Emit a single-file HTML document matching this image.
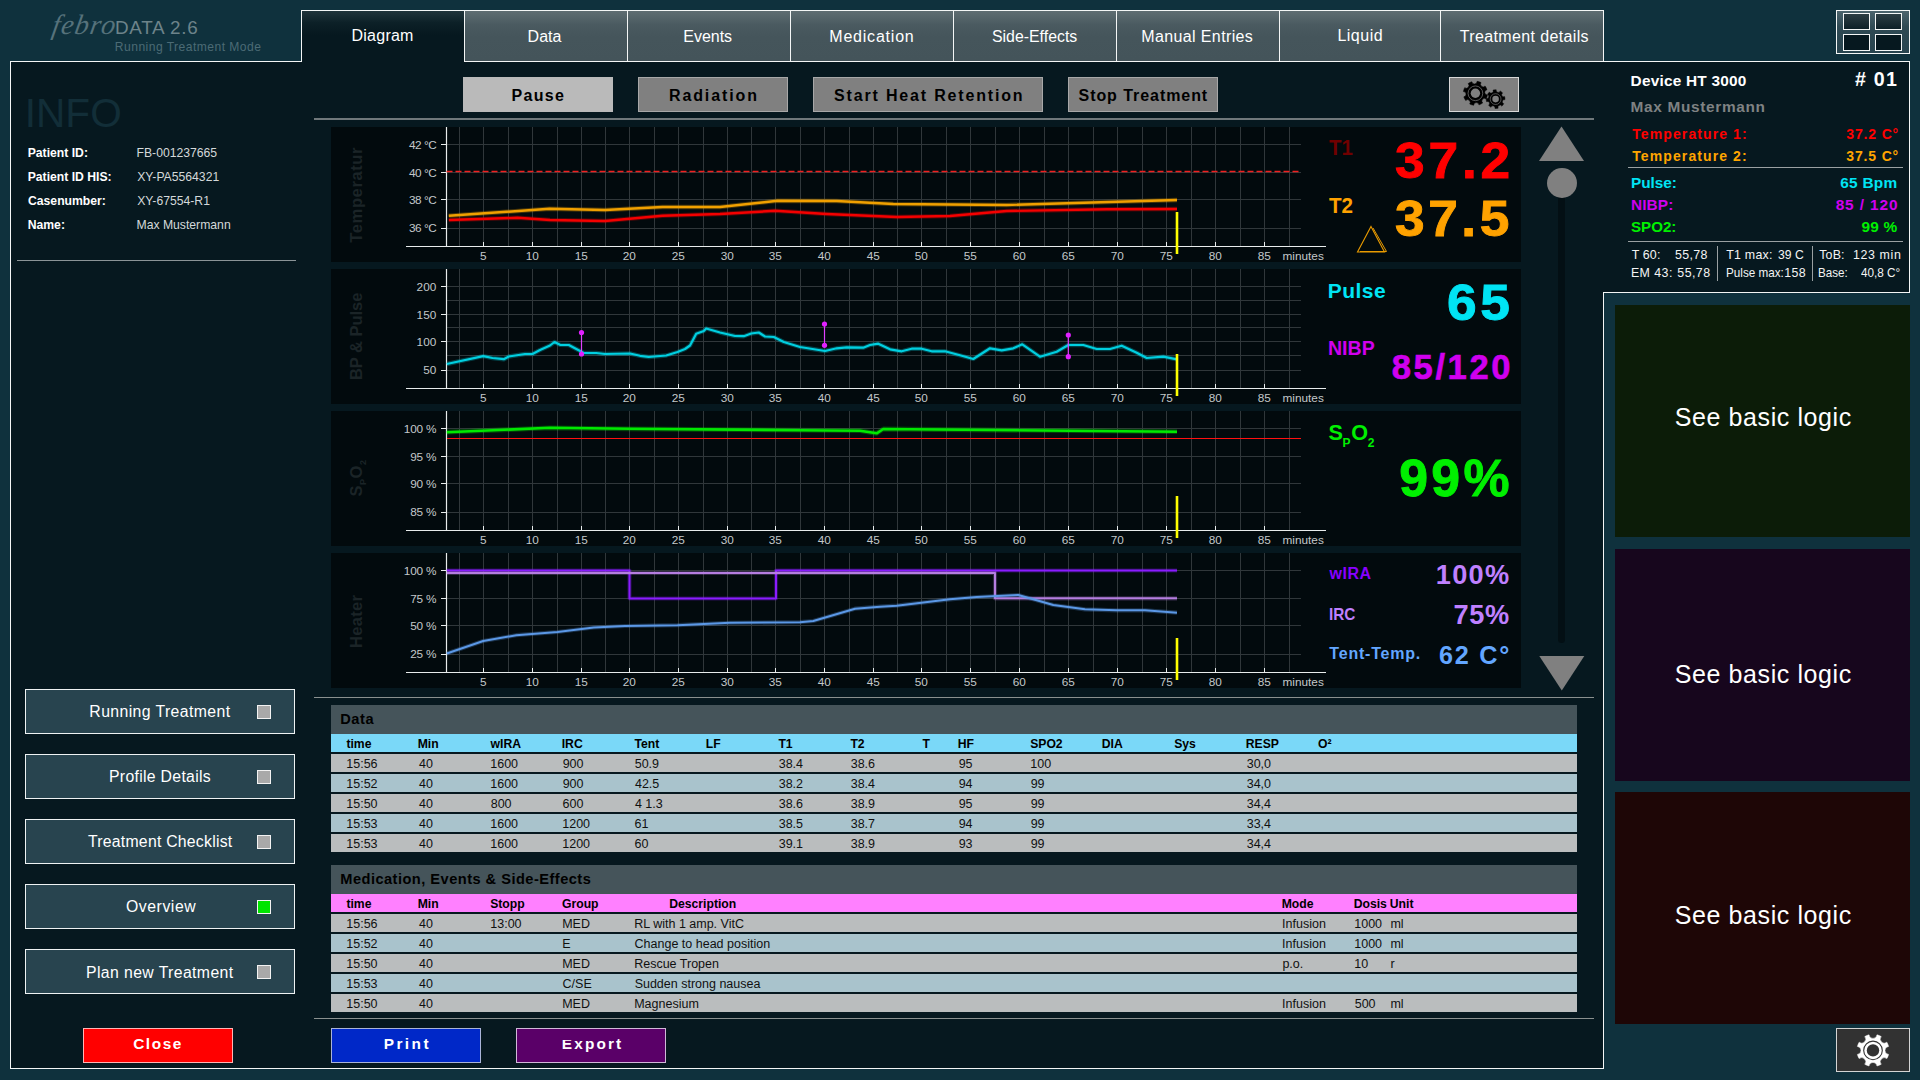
<!DOCTYPE html>
<html lang="en"><head><meta charset="utf-8"><title>febroDATA 2.6 - Running Treatment Mode</title>
<style>
html,body{margin:0;padding:0}
body{width:1920px;height:1080px;background:#0f313d;position:relative;overflow:hidden;font-family:"Liberation Sans",sans-serif}
.t{position:absolute;line-height:1;white-space:nowrap;margin:0;padding:0}
.b{position:absolute;box-sizing:border-box}
svg{position:absolute;left:0;top:0;overflow:visible}
.tab{position:absolute;box-sizing:border-box;top:10px;height:51px;border:1px solid #f4f6f6;border-bottom:none;background:linear-gradient(to bottom,#5f6d72 0px,#4a5a60 14px,#45555b 26px,#44545a 100%)}
.tab.on{height:52px;background:linear-gradient(to bottom,#20343b 0px,#0c2027 12px,#06181f 24px,#06181f 100%)}
.sb{position:absolute;box-sizing:border-box;left:25px;width:270px;height:45px;background:#28444f;border:1px solid #eef2f3}
.cb{position:absolute;box-sizing:border-box;left:231px;top:15px;width:14px;height:14px;background:#a9a9a9;border:1px solid #f2f2f2}
.row{position:absolute;left:331px;width:1246px;height:18px}
</style></head><body>

<div class="b" style="left:10px;top:61px;width:1594px;height:1008px;background:#06181f;border:1px solid #f4f6f6;border-right:none;"></div>
<div class="b" style="left:1603px;top:61px;width:307px;height:232px;background:#06181f;border:1px solid #f4f6f6;border-left:none;"></div>
<div class="b" style="left:1603px;top:292px;width:1px;height:777px;background:#f4f6f6;"></div>
<nav aria-label="Views">
<div class="tab on" style="left:301px;width:164px"></div>
<span class="t" style="left:351.52px;top:28.36px;font-size:16px;color:#fff;letter-spacing:0.24px;">Diagram</span>
<div class="tab" style="left:464px;width:164px"></div>
<span class="t" style="left:527.62px;top:29.46px;font-size:16px;color:#fff;letter-spacing:0.01px;">Data</span>
<div class="tab" style="left:627px;width:164px"></div>
<span class="t" style="left:683.32px;top:29.46px;font-size:16px;color:#fff;letter-spacing:-0.03px;">Events</span>
<div class="tab" style="left:790px;width:164px"></div>
<span class="t" style="left:829.32px;top:29.46px;font-size:16px;color:#fff;letter-spacing:0.78px;">Medication</span>
<div class="tab" style="left:953px;width:164px"></div>
<span class="t" style="left:991.59px;top:29.46px;font-size:16px;color:#fff;transform:scaleX(0.9915);transform-origin:0 0;">Side-Effects</span>
<div class="tab" style="left:1116px;width:164px"></div>
<span class="t" style="left:1141.32px;top:29.46px;font-size:16px;color:#fff;letter-spacing:0.37px;">Manual Entries</span>
<div class="tab" style="left:1279px;width:162px"></div>
<span class="t" style="left:1337.42px;top:28.36px;font-size:16px;color:#fff;letter-spacing:0.50px;">Liquid</span>
<div class="tab" style="left:1440px;width:164px"></div>
<span class="t" style="left:1459.78px;top:29.46px;font-size:16px;color:#fff;letter-spacing:0.36px;">Treatment details</span>
</nav>
<header>
<span class="t" style="left:49.72px;top:10.50px;font-size:28px;color:#56727b;font-style:italic;font-family:'Liberation Serif',serif;letter-spacing:1.25px;transform:skewX(-10deg);transform-origin:0 100%;">febro</span>
<span class="t" style="left:115.09px;top:19.10px;font-size:18.9px;color:#6d838a;letter-spacing:0.65px;">DATA 2.6</span>
<span class="t" style="left:114.83px;top:41.16px;font-size:12.1px;color:#4c6b75;letter-spacing:0.46px;">Running Treatment Mode</span>
<div class="b" style="left:1836px;top:10px;width:74px;height:44px;background:linear-gradient(to bottom,#4c646d 0px,#2f4a54 16px,#28444f 100%);border:1px solid #f4f6f6;"></div>
<div class="b" style="left:1843px;top:13px;width:27px;height:17px;background:linear-gradient(to bottom,#2c3d43,#0d2027);border:1px solid #f4f6f6;"></div>
<div class="b" style="left:1875px;top:13px;width:27px;height:17px;background:linear-gradient(to bottom,#2c3d43,#0d2027);border:1px solid #f4f6f6;"></div>
<div class="b" style="left:1843px;top:34px;width:27px;height:17px;background:#06181f;border:1px solid #f4f6f6;"></div>
<div class="b" style="left:1875px;top:34px;width:27px;height:17px;background:#06181f;border:1px solid #f4f6f6;"></div>
</header>
<aside aria-label="Patient info and navigation">
<span class="t" style="left:24.65px;top:92.93px;font-size:40.6px;color:#122e38;letter-spacing:0.06px;">INFO</span>
<span class="t" style="left:27.71px;top:146.97px;font-size:12.2px;color:#fff;font-weight:bold;">Patient ID:</span>
<span class="t" style="left:136.52px;top:146.97px;font-size:12.2px;color:#d4d9da;">FB-001237665</span>
<span class="t" style="left:27.71px;top:170.97px;font-size:12.2px;color:#fff;font-weight:bold;">Patient ID HIS:</span>
<span class="t" style="left:137.19px;top:170.97px;font-size:12.2px;color:#d4d9da;">XY-PA5564321</span>
<span class="t" style="left:28.01px;top:194.97px;font-size:12.2px;color:#fff;font-weight:bold;">Casenumber:</span>
<span class="t" style="left:137.19px;top:194.97px;font-size:12.2px;color:#d4d9da;">XY-67554-R1</span>
<span class="t" style="left:27.71px;top:218.97px;font-size:12.2px;color:#fff;font-weight:bold;">Name:</span>
<span class="t" style="left:136.52px;top:218.97px;font-size:12.2px;color:#d4d9da;">Max Mustermann</span>
<div class="b" style="left:17px;top:259.5px;width:279px;height:1.5px;background:#8b9497;"></div>
<div class="sb" style="top:689px"><div class="cb" style=""></div></div>
<span class="t" style="left:89.34px;top:704.43px;font-size:15.8px;color:#fff;letter-spacing:0.40px;">Running Treatment</span>
<div class="sb" style="top:754px"><div class="cb" style=""></div></div>
<span class="t" style="left:109.04px;top:769.43px;font-size:15.8px;color:#fff;letter-spacing:0.30px;">Profile Details</span>
<div class="sb" style="top:819px"><div class="cb" style=""></div></div>
<span class="t" style="left:87.98px;top:834.43px;font-size:15.8px;color:#fff;letter-spacing:0.24px;">Treatment Checklist</span>
<div class="sb" style="top:884px"><div class="cb" style="background:#00e400;"></div></div>
<span class="t" style="left:125.99px;top:899.43px;font-size:15.8px;color:#fff;letter-spacing:0.55px;">Overview</span>
<div class="sb" style="top:949px"><div class="cb" style=""></div></div>
<span class="t" style="left:86.04px;top:965.13px;font-size:15.8px;color:#fff;letter-spacing:0.39px;">Plan new Treatment</span>
<div class="b" style="left:83px;top:1028px;width:150px;height:35px;background:#ff0000;border:1px solid #ffb4b4;"></div>
<span class="t" style="left:133.18px;top:1035.66px;font-size:15.4px;color:#fff;font-weight:bold;letter-spacing:1.58px;">Close</span>
</aside>
<main>
<div class="b" style="left:331px;top:1028px;width:150px;height:35px;background:#0028c8;border:1px solid #aab4d8;"></div>
<span class="t" style="left:383.70px;top:1035.66px;font-size:15.4px;color:#fff;font-weight:bold;letter-spacing:2.46px;">Print</span>
<div class="b" style="left:516px;top:1028px;width:150px;height:35px;background:#5a0068;border:1px solid #d0b8d8;"></div>
<span class="t" style="left:561.80px;top:1035.66px;font-size:15.4px;color:#fff;font-weight:bold;letter-spacing:2.13px;">Export</span>
<div class="b" style="left:561px;top:1036px;width:12px;height:3.6px;background:#5a0068;"></div>
<div class="b" style="left:463px;top:77px;width:150px;height:35px;background:#bababa;border:1px solid #bababa;"></div>
<span class="t" style="left:511.46px;top:87.96px;font-size:16px;color:#000;font-weight:bold;letter-spacing:1.35px;">Pause</span>
<div class="b" style="left:638px;top:77px;width:150px;height:35px;background:#808080;border:1px solid #a8a8a8;"></div>
<span class="t" style="left:668.96px;top:87.96px;font-size:16px;color:#000;font-weight:bold;letter-spacing:1.89px;">Radiation</span>
<div class="b" style="left:813px;top:77px;width:230px;height:35px;background:#808080;border:1px solid #a8a8a8;"></div>
<span class="t" style="left:834.02px;top:87.96px;font-size:16px;color:#000;font-weight:bold;letter-spacing:1.83px;">Start Heat Retention</span>
<div class="b" style="left:1068px;top:77px;width:150px;height:35px;background:#808080;border:1px solid #a8a8a8;"></div>
<span class="t" style="left:1078.52px;top:87.96px;font-size:16px;color:#000;font-weight:bold;letter-spacing:0.94px;">Stop Treatment</span>
<div class="b" style="left:1449px;top:77px;width:70px;height:35px;background:#808080;border:1px solid #d8d8d8;"></div>
<svg width="1920" height="1080" viewBox="0 0 1920 1080">
<path d="M1482.66 102.98A12.1 12.1 0 0 1 1478.96 104.86A2.65 2.65 0 0 0 1473.69 105.28A12.1 12.1 0 0 1 1469.74 104.00A2.65 2.65 0 0 0 1465.72 100.56A12.1 12.1 0 0 1 1463.84 96.86A2.65 2.65 0 0 0 1463.42 91.59A12.1 12.1 0 0 1 1464.70 87.64A2.65 2.65 0 0 0 1468.14 83.62A12.1 12.1 0 0 1 1471.84 81.74A2.65 2.65 0 0 0 1477.11 81.32A12.1 12.1 0 0 1 1481.06 82.60A2.65 2.65 0 0 0 1485.08 86.04A12.1 12.1 0 0 1 1486.96 89.74A2.65 2.65 0 0 0 1487.38 95.01A12.1 12.1 0 0 1 1486.10 98.96A2.65 2.65 0 0 0 1482.66 102.98Z" fill="#000" stroke="#000" stroke-width="0.5" stroke-linejoin="round"/><circle cx="1475.4" cy="93.3" r="7.35" fill="none" stroke="#808080" stroke-width="0.7"/><circle cx="1475.4" cy="93.3" r="4.7" fill="#808080"/>
<path d="M1503.81 103.68A9.4 9.4 0 0 1 1501.79 106.18A2.06 2.06 0 0 0 1498.17 108.14A9.4 9.4 0 0 1 1494.97 108.48A2.06 2.06 0 0 0 1491.02 107.31A9.4 9.4 0 0 1 1488.52 105.29A2.06 2.06 0 0 0 1486.56 101.67A9.4 9.4 0 0 1 1486.22 98.47A2.06 2.06 0 0 0 1487.39 94.52A9.4 9.4 0 0 1 1489.41 92.02A2.06 2.06 0 0 0 1493.03 90.06A9.4 9.4 0 0 1 1496.23 89.72A2.06 2.06 0 0 0 1500.18 90.89A9.4 9.4 0 0 1 1502.68 92.91A2.06 2.06 0 0 0 1504.64 96.53A9.4 9.4 0 0 1 1504.98 99.73A2.06 2.06 0 0 0 1503.81 103.68Z" fill="#000" stroke="#000" stroke-width="0.4" stroke-linejoin="round"/><circle cx="1495.6" cy="99.1" r="5.4" fill="none" stroke="#808080" stroke-width="0.6"/><circle cx="1495.6" cy="99.1" r="3.3" fill="#808080"/>
</svg>
<div class="b" style="left:314px;top:118px;width:1280px;height:2px;background:#70787b;"></div>
<div class="b" style="left:314px;top:697px;width:1280px;height:1px;background:#8a908f;"></div>
<div class="b" style="left:314px;top:1018px;width:1280px;height:1px;background:#8a908f;"></div><div class="b" style="left:331px;top:127px;width:1190px;height:135px;background:#020a0d"></div>
<div class="b" style="left:331px;top:269px;width:1190px;height:135px;background:#020a0d"></div>
<div class="b" style="left:331px;top:411px;width:1190px;height:135px;background:#020a0d"></div>
<div class="b" style="left:331px;top:553px;width:1190px;height:135px;background:#020a0d"></div>
<svg width="1920" height="1080" viewBox="0 0 1920 1080" font-family="Liberation Sans, sans-serif">
<path d="M459.5 127V246.5 M483.5 127V246.5 M508.5 127V246.5 M532.5 127V246.5 M557.5 127V246.5 M581.5 127V246.5 M605.5 127V246.5 M629.5 127V246.5 M654.5 127V246.5 M678.5 127V246.5 M703.5 127V246.5 M727.5 127V246.5 M751.5 127V246.5 M775.5 127V246.5 M800.5 127V246.5 M824.5 127V246.5 M849.5 127V246.5 M873.5 127V246.5 M897.5 127V246.5 M921.5 127V246.5 M946.5 127V246.5 M970.5 127V246.5 M995.5 127V246.5 M1019.5 127V246.5 M1044.5 127V246.5 M1068.5 127V246.5 M1093.5 127V246.5 M1117.5 127V246.5 M1142.5 127V246.5 M1166.5 127V246.5 M1191.5 127V246.5 M1215.5 127V246.5 M1240.5 127V246.5 M1264.5 127V246.5 M1289.5 127V246.5 M446.5 144.5H1301 M446.5 172.5H1301 M446.5 199.5H1301 M446.5 228.5H1301" stroke="#30373a" stroke-width="1" fill="none" shape-rendering="crispEdges"/>
<path d="M483.5 242.0V246.5 M532.5 242.0V246.5 M581.5 242.0V246.5 M629.5 242.0V246.5 M678.5 242.0V246.5 M727.5 242.0V246.5 M775.5 242.0V246.5 M824.5 242.0V246.5 M873.5 242.0V246.5 M921.5 242.0V246.5 M970.5 242.0V246.5 M1019.5 242.0V246.5 M1068.5 242.0V246.5 M1117.5 242.0V246.5 M1166.5 242.0V246.5 M1215.5 242.0V246.5 M1264.5 242.0V246.5 M441.0 144.5H446.5 M441.0 172.5H446.5 M441.0 199.5H446.5 M441.0 228.5H446.5" stroke="#e8ecec" stroke-width="1" fill="none" shape-rendering="crispEdges"/>
<path d="M446.5 127V246.5 M406 246.5H1326" stroke="#e8ecec" stroke-width="1.2" fill="none"/>
<text x="483.3" y="259.6" font-size="11.8" fill="#c3c8ca" text-anchor="middle">5</text>
<text x="532.3" y="259.6" font-size="11.8" fill="#c3c8ca" text-anchor="middle">10</text>
<text x="581.3" y="259.6" font-size="11.8" fill="#c3c8ca" text-anchor="middle">15</text>
<text x="629.3" y="259.6" font-size="11.8" fill="#c3c8ca" text-anchor="middle">20</text>
<text x="678.3" y="259.6" font-size="11.8" fill="#c3c8ca" text-anchor="middle">25</text>
<text x="727.3" y="259.6" font-size="11.8" fill="#c3c8ca" text-anchor="middle">30</text>
<text x="775.3" y="259.6" font-size="11.8" fill="#c3c8ca" text-anchor="middle">35</text>
<text x="824.3" y="259.6" font-size="11.8" fill="#c3c8ca" text-anchor="middle">40</text>
<text x="873.3" y="259.6" font-size="11.8" fill="#c3c8ca" text-anchor="middle">45</text>
<text x="921.3" y="259.6" font-size="11.8" fill="#c3c8ca" text-anchor="middle">50</text>
<text x="970.3" y="259.6" font-size="11.8" fill="#c3c8ca" text-anchor="middle">55</text>
<text x="1019.3" y="259.6" font-size="11.8" fill="#c3c8ca" text-anchor="middle">60</text>
<text x="1068.3" y="259.6" font-size="11.8" fill="#c3c8ca" text-anchor="middle">65</text>
<text x="1117.3" y="259.6" font-size="11.8" fill="#c3c8ca" text-anchor="middle">70</text>
<text x="1166.3" y="259.6" font-size="11.8" fill="#c3c8ca" text-anchor="middle">75</text>
<text x="1215.3" y="259.6" font-size="11.8" fill="#c3c8ca" text-anchor="middle">80</text>
<text x="1264.3" y="259.6" font-size="11.8" fill="#c3c8ca" text-anchor="middle">85</text>
<text x="1282.5" y="259.5" font-size="11.8" fill="#c3c8ca">minutes</text>
<text x="436.3" y="149" font-size="11.8" fill="#c3c8ca" text-anchor="end" letter-spacing="-0.45">42 °C</text>
<text x="436.3" y="176.5" font-size="11.8" fill="#c3c8ca" text-anchor="end" letter-spacing="-0.45">40 °C</text>
<text x="436.3" y="203.8" font-size="11.8" fill="#c3c8ca" text-anchor="end" letter-spacing="-0.45">38 °C</text>
<text x="436.3" y="231.5" font-size="11.8" fill="#c3c8ca" text-anchor="end" letter-spacing="-0.45">36 °C</text>
<text transform="translate(361.5 194.8) rotate(-90)" font-size="16.5" font-weight="bold" fill="#1b2427" text-anchor="middle" letter-spacing="0.61">Temperatur</text>
<path d="M446.5 171.5H1301" stroke="#f02020" stroke-width="1.5" stroke-dasharray="6 3" fill="none"/>
<path d="M448.8 215.8 L549.5 208.8 L605.0 210.0 L662.5 207.0 L720.0 207.0 L777.5 200.8 L836.7 201.0 L893.3 204.0 L1006.7 205.0 L1177.0 200.0" stroke="#f0a000" stroke-width="4.6" fill="none" opacity="0.28" stroke-linejoin="round"/><path d="M448.8 215.8 L549.5 208.8 L605.0 210.0 L662.5 207.0 L720.0 207.0 L777.5 200.8 L836.7 201.0 L893.3 204.0 L1006.7 205.0 L1177.0 200.0" stroke="#f0a000" stroke-width="2.4" fill="none" stroke-linejoin="round"/>
<path d="M448.8 220.0 L517.5 217.8 L550.0 220.0 L605.0 221.0 L662.5 215.8 L720.0 214.0 L775.0 210.8 L826.7 214.0 L896.7 217.0 L950.0 216.0 L1006.7 211.0 L1106.7 209.3 L1177.0 209.0" stroke="#f40000" stroke-width="4.6" fill="none" opacity="0.28" stroke-linejoin="round"/><path d="M448.8 220.0 L517.5 217.8 L550.0 220.0 L605.0 221.0 L662.5 215.8 L720.0 214.0 L775.0 210.8 L826.7 214.0 L896.7 217.0 L950.0 216.0 L1006.7 211.0 L1106.7 209.3 L1177.0 209.0" stroke="#f40000" stroke-width="2.4" fill="none" stroke-linejoin="round"/>
<rect x="1175.7" y="212" width="2.6" height="42" fill="#ffff00"/>
<path d="M459.5 269V388.5 M483.5 269V388.5 M508.5 269V388.5 M532.5 269V388.5 M557.5 269V388.5 M581.5 269V388.5 M605.5 269V388.5 M629.5 269V388.5 M654.5 269V388.5 M678.5 269V388.5 M703.5 269V388.5 M727.5 269V388.5 M751.5 269V388.5 M775.5 269V388.5 M800.5 269V388.5 M824.5 269V388.5 M849.5 269V388.5 M873.5 269V388.5 M897.5 269V388.5 M921.5 269V388.5 M946.5 269V388.5 M970.5 269V388.5 M995.5 269V388.5 M1019.5 269V388.5 M1044.5 269V388.5 M1068.5 269V388.5 M1093.5 269V388.5 M1117.5 269V388.5 M1142.5 269V388.5 M1166.5 269V388.5 M1191.5 269V388.5 M1215.5 269V388.5 M1240.5 269V388.5 M1264.5 269V388.5 M1289.5 269V388.5 M446.5 286.5H1301 M446.5 314H1301 M446.5 341.5H1301 M446.5 370.25H1301 M446.5 300.25H1301 M446.5 327.75H1301 M446.5 355.9H1301" stroke="#30373a" stroke-width="1" fill="none" shape-rendering="crispEdges"/>
<path d="M483.5 384.0V388.5 M532.5 384.0V388.5 M581.5 384.0V388.5 M629.5 384.0V388.5 M678.5 384.0V388.5 M727.5 384.0V388.5 M775.5 384.0V388.5 M824.5 384.0V388.5 M873.5 384.0V388.5 M921.5 384.0V388.5 M970.5 384.0V388.5 M1019.5 384.0V388.5 M1068.5 384.0V388.5 M1117.5 384.0V388.5 M1166.5 384.0V388.5 M1215.5 384.0V388.5 M1264.5 384.0V388.5 M441.0 286.5H446.5 M441.0 314H446.5 M441.0 341.5H446.5 M441.0 370.25H446.5" stroke="#e8ecec" stroke-width="1" fill="none" shape-rendering="crispEdges"/>
<path d="M446.5 269V388.5 M406 388.5H1326" stroke="#e8ecec" stroke-width="1.2" fill="none"/>
<text x="483.3" y="401.6" font-size="11.8" fill="#c3c8ca" text-anchor="middle">5</text>
<text x="532.3" y="401.6" font-size="11.8" fill="#c3c8ca" text-anchor="middle">10</text>
<text x="581.3" y="401.6" font-size="11.8" fill="#c3c8ca" text-anchor="middle">15</text>
<text x="629.3" y="401.6" font-size="11.8" fill="#c3c8ca" text-anchor="middle">20</text>
<text x="678.3" y="401.6" font-size="11.8" fill="#c3c8ca" text-anchor="middle">25</text>
<text x="727.3" y="401.6" font-size="11.8" fill="#c3c8ca" text-anchor="middle">30</text>
<text x="775.3" y="401.6" font-size="11.8" fill="#c3c8ca" text-anchor="middle">35</text>
<text x="824.3" y="401.6" font-size="11.8" fill="#c3c8ca" text-anchor="middle">40</text>
<text x="873.3" y="401.6" font-size="11.8" fill="#c3c8ca" text-anchor="middle">45</text>
<text x="921.3" y="401.6" font-size="11.8" fill="#c3c8ca" text-anchor="middle">50</text>
<text x="970.3" y="401.6" font-size="11.8" fill="#c3c8ca" text-anchor="middle">55</text>
<text x="1019.3" y="401.6" font-size="11.8" fill="#c3c8ca" text-anchor="middle">60</text>
<text x="1068.3" y="401.6" font-size="11.8" fill="#c3c8ca" text-anchor="middle">65</text>
<text x="1117.3" y="401.6" font-size="11.8" fill="#c3c8ca" text-anchor="middle">70</text>
<text x="1166.3" y="401.6" font-size="11.8" fill="#c3c8ca" text-anchor="middle">75</text>
<text x="1215.3" y="401.6" font-size="11.8" fill="#c3c8ca" text-anchor="middle">80</text>
<text x="1264.3" y="401.6" font-size="11.8" fill="#c3c8ca" text-anchor="middle">85</text>
<text x="1282.5" y="401.5" font-size="11.8" fill="#c3c8ca">minutes</text>
<text x="436.3" y="291" font-size="11.8" fill="#c3c8ca" text-anchor="end">200</text>
<text x="436.3" y="318.5" font-size="11.8" fill="#c3c8ca" text-anchor="end">150</text>
<text x="436.3" y="345.8" font-size="11.8" fill="#c3c8ca" text-anchor="end">100</text>
<text x="436.3" y="373.5" font-size="11.8" fill="#c3c8ca" text-anchor="end">50</text>
<text transform="translate(361.5 336.3) rotate(-90)" font-size="16.5" font-weight="bold" fill="#1b2427" text-anchor="middle" letter-spacing="-0.03">BP &amp; Pulse</text>
<path d="M446.8 364.0 L483.2 356.2 L492.5 358.0 L503.8 359.2 L508.8 356.5 L525.0 354.0 L532.5 354.0 L540.0 350.0 L550.0 345.5 L554.5 342.0 L560.0 344.8 L568.8 345.0 L583.8 353.0 L596.2 353.0 L605.0 354.0 L630.0 353.5 L640.0 355.8 L648.8 357.0 L666.2 355.5 L677.5 352.0 L685.0 349.0 L690.0 345.5 L696.2 333.8 L703.8 331.0 L706.2 328.5 L720.0 332.5 L735.0 336.0 L743.8 336.2 L751.2 333.5 L758.8 332.5 L765.0 336.5 L773.8 337.0 L783.8 342.0 L800.0 347.0 L825.0 351.0 L836.7 348.3 L846.7 347.3 L863.3 347.7 L870.0 345.0 L878.3 343.7 L890.0 349.3 L901.7 351.3 L911.7 348.7 L921.7 348.7 L931.7 351.3 L945.0 351.3 L960.0 355.3 L973.3 359.0 L990.0 348.3 L1001.7 350.3 L1013.3 348.3 L1022.3 344.3 L1040.0 356.7 L1056.7 351.7 L1068.3 345.0 L1083.3 345.0 L1096.7 349.0 L1110.0 349.0 L1121.7 345.7 L1136.7 352.7 L1146.7 358.0 L1163.3 356.7 L1177.0 359.3" stroke="#00cfe0" stroke-width="4.4" fill="none" opacity="0.28" stroke-linejoin="round"/><path d="M446.8 364.0 L483.2 356.2 L492.5 358.0 L503.8 359.2 L508.8 356.5 L525.0 354.0 L532.5 354.0 L540.0 350.0 L550.0 345.5 L554.5 342.0 L560.0 344.8 L568.8 345.0 L583.8 353.0 L596.2 353.0 L605.0 354.0 L630.0 353.5 L640.0 355.8 L648.8 357.0 L666.2 355.5 L677.5 352.0 L685.0 349.0 L690.0 345.5 L696.2 333.8 L703.8 331.0 L706.2 328.5 L720.0 332.5 L735.0 336.0 L743.8 336.2 L751.2 333.5 L758.8 332.5 L765.0 336.5 L773.8 337.0 L783.8 342.0 L800.0 347.0 L825.0 351.0 L836.7 348.3 L846.7 347.3 L863.3 347.7 L870.0 345.0 L878.3 343.7 L890.0 349.3 L901.7 351.3 L911.7 348.7 L921.7 348.7 L931.7 351.3 L945.0 351.3 L960.0 355.3 L973.3 359.0 L990.0 348.3 L1001.7 350.3 L1013.3 348.3 L1022.3 344.3 L1040.0 356.7 L1056.7 351.7 L1068.3 345.0 L1083.3 345.0 L1096.7 349.0 L1110.0 349.0 L1121.7 345.7 L1136.7 352.7 L1146.7 358.0 L1163.3 356.7 L1177.0 359.3" stroke="#00cfe0" stroke-width="2.2" fill="none" stroke-linejoin="round"/>
<path d="M581.5 332.5V354" stroke="#e040ff" stroke-width="1.2"/><circle cx="581.5" cy="332.5" r="2.6" fill="#e020ff"/><circle cx="581.5" cy="354" r="2.6" fill="#e020ff"/>
<path d="M824.5 324V345.3" stroke="#e040ff" stroke-width="1.2"/><circle cx="824.5" cy="324" r="2.6" fill="#e020ff"/><circle cx="824.5" cy="345.3" r="2.6" fill="#e020ff"/>
<path d="M1068.3 335V356.7" stroke="#e040ff" stroke-width="1.2"/><circle cx="1068.3" cy="335" r="2.6" fill="#e020ff"/><circle cx="1068.3" cy="356.7" r="2.6" fill="#e020ff"/>
<rect x="1175.7" y="354" width="2.6" height="42" fill="#ffff00"/>
<path d="M459.5 411V530.5 M483.5 411V530.5 M508.5 411V530.5 M532.5 411V530.5 M557.5 411V530.5 M581.5 411V530.5 M605.5 411V530.5 M629.5 411V530.5 M654.5 411V530.5 M678.5 411V530.5 M703.5 411V530.5 M727.5 411V530.5 M751.5 411V530.5 M775.5 411V530.5 M800.5 411V530.5 M824.5 411V530.5 M849.5 411V530.5 M873.5 411V530.5 M897.5 411V530.5 M921.5 411V530.5 M946.5 411V530.5 M970.5 411V530.5 M995.5 411V530.5 M1019.5 411V530.5 M1044.5 411V530.5 M1068.5 411V530.5 M1093.5 411V530.5 M1117.5 411V530.5 M1142.5 411V530.5 M1166.5 411V530.5 M1191.5 411V530.5 M1215.5 411V530.5 M1240.5 411V530.5 M1264.5 411V530.5 M1289.5 411V530.5 M446.5 428.5H1301 M446.5 456.5H1301 M446.5 483.5H1301 M446.5 512.5H1301" stroke="#30373a" stroke-width="1" fill="none" shape-rendering="crispEdges"/>
<path d="M483.5 526.0V530.5 M532.5 526.0V530.5 M581.5 526.0V530.5 M629.5 526.0V530.5 M678.5 526.0V530.5 M727.5 526.0V530.5 M775.5 526.0V530.5 M824.5 526.0V530.5 M873.5 526.0V530.5 M921.5 526.0V530.5 M970.5 526.0V530.5 M1019.5 526.0V530.5 M1068.5 526.0V530.5 M1117.5 526.0V530.5 M1166.5 526.0V530.5 M1215.5 526.0V530.5 M1264.5 526.0V530.5 M441.0 428.5H446.5 M441.0 456.5H446.5 M441.0 483.5H446.5 M441.0 512.5H446.5" stroke="#e8ecec" stroke-width="1" fill="none" shape-rendering="crispEdges"/>
<path d="M446.5 411V530.5 M406 530.5H1326" stroke="#e8ecec" stroke-width="1.2" fill="none"/>
<text x="483.3" y="543.6" font-size="11.8" fill="#c3c8ca" text-anchor="middle">5</text>
<text x="532.3" y="543.6" font-size="11.8" fill="#c3c8ca" text-anchor="middle">10</text>
<text x="581.3" y="543.6" font-size="11.8" fill="#c3c8ca" text-anchor="middle">15</text>
<text x="629.3" y="543.6" font-size="11.8" fill="#c3c8ca" text-anchor="middle">20</text>
<text x="678.3" y="543.6" font-size="11.8" fill="#c3c8ca" text-anchor="middle">25</text>
<text x="727.3" y="543.6" font-size="11.8" fill="#c3c8ca" text-anchor="middle">30</text>
<text x="775.3" y="543.6" font-size="11.8" fill="#c3c8ca" text-anchor="middle">35</text>
<text x="824.3" y="543.6" font-size="11.8" fill="#c3c8ca" text-anchor="middle">40</text>
<text x="873.3" y="543.6" font-size="11.8" fill="#c3c8ca" text-anchor="middle">45</text>
<text x="921.3" y="543.6" font-size="11.8" fill="#c3c8ca" text-anchor="middle">50</text>
<text x="970.3" y="543.6" font-size="11.8" fill="#c3c8ca" text-anchor="middle">55</text>
<text x="1019.3" y="543.6" font-size="11.8" fill="#c3c8ca" text-anchor="middle">60</text>
<text x="1068.3" y="543.6" font-size="11.8" fill="#c3c8ca" text-anchor="middle">65</text>
<text x="1117.3" y="543.6" font-size="11.8" fill="#c3c8ca" text-anchor="middle">70</text>
<text x="1166.3" y="543.6" font-size="11.8" fill="#c3c8ca" text-anchor="middle">75</text>
<text x="1215.3" y="543.6" font-size="11.8" fill="#c3c8ca" text-anchor="middle">80</text>
<text x="1264.3" y="543.6" font-size="11.8" fill="#c3c8ca" text-anchor="middle">85</text>
<text x="1282.5" y="543.5" font-size="11.8" fill="#c3c8ca">minutes</text>
<text x="436.3" y="433" font-size="11.8" fill="#c3c8ca" text-anchor="end" letter-spacing="-0.2">100 %</text>
<text x="436.3" y="460.5" font-size="11.8" fill="#c3c8ca" text-anchor="end" letter-spacing="-0.2">95 %</text>
<text x="436.3" y="487.8" font-size="11.8" fill="#c3c8ca" text-anchor="end" letter-spacing="-0.2">90 %</text>
<text x="436.3" y="515.5" font-size="11.8" fill="#c3c8ca" text-anchor="end" letter-spacing="-0.2">85 %</text>
<text transform="translate(361.5 478) rotate(-90)" font-size="16.5" font-weight="bold" fill="#1b2427" text-anchor="middle" letter-spacing="0.5">S<tspan font-size="9" dy="4">P</tspan><tspan dy="-4">O</tspan><tspan font-size="9" dy="4">2</tspan></text>
<path d="M446.5 438.5H1301" stroke="#ff1010" stroke-width="1" shape-rendering="crispEdges"/>
<path d="M446.8 432.2 L550.0 427.8 L630.0 428.8 L800.0 430.2 L860.0 430.7 L876.7 433.3 L883.3 429.0 L1177.0 431.7" stroke="#00e800" stroke-width="4.800000000000001" fill="none" opacity="0.28" stroke-linejoin="round"/><path d="M446.8 432.2 L550.0 427.8 L630.0 428.8 L800.0 430.2 L860.0 430.7 L876.7 433.3 L883.3 429.0 L1177.0 431.7" stroke="#00e800" stroke-width="2.6" fill="none" stroke-linejoin="round"/>
<rect x="1175.7" y="496" width="2.6" height="42" fill="#ffff00"/>
<path d="M459.5 553V672.5 M483.5 553V672.5 M508.5 553V672.5 M532.5 553V672.5 M557.5 553V672.5 M581.5 553V672.5 M605.5 553V672.5 M629.5 553V672.5 M654.5 553V672.5 M678.5 553V672.5 M703.5 553V672.5 M727.5 553V672.5 M751.5 553V672.5 M775.5 553V672.5 M800.5 553V672.5 M824.5 553V672.5 M849.5 553V672.5 M873.5 553V672.5 M897.5 553V672.5 M921.5 553V672.5 M946.5 553V672.5 M970.5 553V672.5 M995.5 553V672.5 M1019.5 553V672.5 M1044.5 553V672.5 M1068.5 553V672.5 M1093.5 553V672.5 M1117.5 553V672.5 M1142.5 553V672.5 M1166.5 553V672.5 M1191.5 553V672.5 M1215.5 553V672.5 M1240.5 553V672.5 M1264.5 553V672.5 M1289.5 553V672.5 M446.5 570.5H1301 M446.5 598.5H1301 M446.5 625.5H1301 M446.5 654.5H1301" stroke="#30373a" stroke-width="1" fill="none" shape-rendering="crispEdges"/>
<path d="M483.5 668.0V672.5 M532.5 668.0V672.5 M581.5 668.0V672.5 M629.5 668.0V672.5 M678.5 668.0V672.5 M727.5 668.0V672.5 M775.5 668.0V672.5 M824.5 668.0V672.5 M873.5 668.0V672.5 M921.5 668.0V672.5 M970.5 668.0V672.5 M1019.5 668.0V672.5 M1068.5 668.0V672.5 M1117.5 668.0V672.5 M1166.5 668.0V672.5 M1215.5 668.0V672.5 M1264.5 668.0V672.5 M441.0 570.5H446.5 M441.0 598.5H446.5 M441.0 625.5H446.5 M441.0 654.5H446.5" stroke="#e8ecec" stroke-width="1" fill="none" shape-rendering="crispEdges"/>
<path d="M446.5 553V672.5 M406 672.5H1326" stroke="#e8ecec" stroke-width="1.2" fill="none"/>
<text x="483.3" y="685.6" font-size="11.8" fill="#c3c8ca" text-anchor="middle">5</text>
<text x="532.3" y="685.6" font-size="11.8" fill="#c3c8ca" text-anchor="middle">10</text>
<text x="581.3" y="685.6" font-size="11.8" fill="#c3c8ca" text-anchor="middle">15</text>
<text x="629.3" y="685.6" font-size="11.8" fill="#c3c8ca" text-anchor="middle">20</text>
<text x="678.3" y="685.6" font-size="11.8" fill="#c3c8ca" text-anchor="middle">25</text>
<text x="727.3" y="685.6" font-size="11.8" fill="#c3c8ca" text-anchor="middle">30</text>
<text x="775.3" y="685.6" font-size="11.8" fill="#c3c8ca" text-anchor="middle">35</text>
<text x="824.3" y="685.6" font-size="11.8" fill="#c3c8ca" text-anchor="middle">40</text>
<text x="873.3" y="685.6" font-size="11.8" fill="#c3c8ca" text-anchor="middle">45</text>
<text x="921.3" y="685.6" font-size="11.8" fill="#c3c8ca" text-anchor="middle">50</text>
<text x="970.3" y="685.6" font-size="11.8" fill="#c3c8ca" text-anchor="middle">55</text>
<text x="1019.3" y="685.6" font-size="11.8" fill="#c3c8ca" text-anchor="middle">60</text>
<text x="1068.3" y="685.6" font-size="11.8" fill="#c3c8ca" text-anchor="middle">65</text>
<text x="1117.3" y="685.6" font-size="11.8" fill="#c3c8ca" text-anchor="middle">70</text>
<text x="1166.3" y="685.6" font-size="11.8" fill="#c3c8ca" text-anchor="middle">75</text>
<text x="1215.3" y="685.6" font-size="11.8" fill="#c3c8ca" text-anchor="middle">80</text>
<text x="1264.3" y="685.6" font-size="11.8" fill="#c3c8ca" text-anchor="middle">85</text>
<text x="1282.5" y="685.5" font-size="11.8" fill="#c3c8ca">minutes</text>
<text x="436.3" y="575" font-size="11.8" fill="#c3c8ca" text-anchor="end" letter-spacing="-0.2">100 %</text>
<text x="436.3" y="602.5" font-size="11.8" fill="#c3c8ca" text-anchor="end" letter-spacing="-0.2">75 %</text>
<text x="436.3" y="629.8" font-size="11.8" fill="#c3c8ca" text-anchor="end" letter-spacing="-0.2">50 %</text>
<text x="436.3" y="657.5" font-size="11.8" fill="#c3c8ca" text-anchor="end" letter-spacing="-0.2">25 %</text>
<text transform="translate(361.5 621.4) rotate(-90)" font-size="16.5" font-weight="bold" fill="#1b2427" text-anchor="middle" letter-spacing="0.33">Heater</text>
<path d="M446.8 570.5 L629.5 570.5 L629.5 598.5 L776.0 598.5 L776.0 570.5 L1177.0 570.5" stroke="#8a1cff" stroke-width="4.2" fill="none" opacity="0.28" stroke-linejoin="round"/><path d="M446.8 570.5 L629.5 570.5 L629.5 598.5 L776.0 598.5 L776.0 570.5 L1177.0 570.5" stroke="#8a1cff" stroke-width="2" fill="none" stroke-linejoin="round"/>
<path d="M446.8 573.0 L995.0 573.0 L995.0 598.3 L1177.0 598.3" stroke="#b57ee0" stroke-width="4.2" fill="none" opacity="0.28" stroke-linejoin="round"/><path d="M446.8 573.0 L995.0 573.0 L995.0 598.3 L1177.0 598.3" stroke="#b57ee0" stroke-width="2" fill="none" stroke-linejoin="round"/>
<path d="M446.8 653.5 L483.2 641.0 L516.2 635.2 L557.5 632.0 L593.8 627.5 L625.0 626.0 L677.5 625.2 L730.0 622.8 L800.0 622.2 L813.3 621.0 L855.0 608.7 L880.0 606.7 L896.7 605.7 L950.0 599.3 L976.7 597.0 L1018.3 595.0 L1053.3 605.0 L1085.0 609.3 L1116.7 610.3 L1145.0 610.3 L1177.0 612.7" stroke="#5b98e6" stroke-width="4.2" fill="none" opacity="0.28" stroke-linejoin="round"/><path d="M446.8 653.5 L483.2 641.0 L516.2 635.2 L557.5 632.0 L593.8 627.5 L625.0 626.0 L677.5 625.2 L730.0 622.8 L800.0 622.2 L813.3 621.0 L855.0 608.7 L880.0 606.7 L896.7 605.7 L950.0 599.3 L976.7 597.0 L1018.3 595.0 L1053.3 605.0 L1085.0 609.3 L1116.7 610.3 L1145.0 610.3 L1177.0 612.7" stroke="#5b98e6" stroke-width="2" fill="none" stroke-linejoin="round"/>
<rect x="1175.7" y="638" width="2.6" height="42" fill="#ffff00"/>
<rect x="1558" y="190" width="7" height="453" rx="3.5" fill="#030f14"/>
<path d="M1561.5 126.5L1584 161H1539Z" fill="#808080"/>
<circle cx="1562" cy="183" r="15" fill="#808080"/>
<path d="M1539.3 656H1584.3L1561.8 690.5Z" fill="#808080"/>
<path d="M1371 226.5L1384.5 252H1357.5Z" stroke="#e89a00" stroke-width="1.1" fill="none" stroke-linejoin="miter"/>
<path d="M1373 228L1386.5 251.5H1360" stroke="#e89a00" stroke-width="1" fill="none"/>
</svg>
<span class="t" style="left:1329.30px;top:137.22px;font-size:22.3px;color:#700000;font-weight:bold;transform:scaleX(0.9125);transform-origin:0 0;">T1</span>
<span class="t" style="left:1394.87px;top:136.94px;font-size:49.8px;color:#ff0000;font-weight:bold;letter-spacing:3.56px;transform:scaleX(1.0700);transform-origin:0 0;-webkit-text-stroke:0.9px #ff0000;">37.2</span>
<span class="t" style="left:1329.29px;top:195.47px;font-size:22.3px;color:#ffa200;font-weight:bold;transform:scaleX(0.9248);transform-origin:0 0;">T2</span>
<span class="t" style="left:1394.87px;top:194.94px;font-size:49.8px;color:#ffa200;font-weight:bold;letter-spacing:3.31px;transform:scaleX(1.0700);transform-origin:0 0;-webkit-text-stroke:0.9px #ffa200;">37.5</span>
<span class="t" style="left:1327.63px;top:280.32px;font-size:21px;color:#00e4f4;font-weight:bold;letter-spacing:0.51px;">Pulse</span>
<span class="t" style="left:1446.83px;top:279.04px;font-size:49.8px;color:#00e4f4;font-weight:bold;letter-spacing:3.42px;transform:scaleX(1.0700);transform-origin:0 0;-webkit-text-stroke:0.9px #00e4f4;">65</span>
<span class="t" style="left:1328.23px;top:338.24px;font-size:20.8px;color:#d000ee;font-weight:bold;transform:scaleX(0.9397);transform-origin:0 0;">NIBP</span>
<span class="t" style="left:1391.76px;top:349.81px;font-size:34.6px;color:#d000ee;font-weight:bold;letter-spacing:2.60px;-webkit-text-stroke:0.6px #d000ee;">85/120</span>
<span class="t" style="left:1328.6px;top:421.82px;font-size:21.6px;color:#00f000;font-weight:bold;letter-spacing:-0.4px">S<span style="font-size:12px;position:relative;top:7.6px;letter-spacing:0.6px">P</span>O<span style="font-size:12px;position:relative;top:7.6px;letter-spacing:0">2</span></span>
<span class="t" style="left:1399.19px;top:452.95px;font-size:51.8px;color:#00f000;font-weight:bold;letter-spacing:3.36px;-webkit-text-stroke:0.9px #00f000;">99%</span>
<span class="t" style="left:1329.58px;top:566.31px;font-size:16px;color:#8800ff;font-weight:bold;letter-spacing:0.52px;">wIRA</span>
<span class="t" style="left:1435.87px;top:561.08px;font-size:27.2px;color:#bf80ff;font-weight:bold;letter-spacing:1.23px;">100%</span>
<span class="t" style="left:1328.50px;top:606.47px;font-size:16.4px;color:#bf80ff;font-weight:bold;transform:scaleX(0.9355);transform-origin:0 0;">IRC</span>
<span class="t" style="left:1453.41px;top:601.08px;font-size:27.2px;color:#bf80ff;font-weight:bold;letter-spacing:0.69px;">75%</span>
<span class="t" style="left:1329.34px;top:646.06px;font-size:16px;color:#62a6ff;font-weight:bold;letter-spacing:0.79px;">Tent-Temp.</span>
<span class="t" style="left:1439.12px;top:642.77px;font-size:25.2px;color:#62a6ff;font-weight:bold;letter-spacing:1.73px;">62 C°</span><div class="b" style="left:331px;top:705px;width:1246px;height:29px;background:#45545a;"></div>
<span class="t" style="left:340.25px;top:712.24px;font-size:14.6px;color:#000;font-weight:bold;letter-spacing:0.57px;">Data</span>
<div class="b" style="left:331px;top:734px;width:1246px;height:18px;background:#7ad8f8;"></div>
<span class="t" style="left:346.38px;top:738.27px;font-size:12.2px;color:#000;font-weight:bold;">time</span>
<span class="t" style="left:417.71px;top:738.27px;font-size:12.2px;color:#000;font-weight:bold;">Min</span>
<span class="t" style="left:490.56px;top:738.27px;font-size:12.2px;color:#000;font-weight:bold;">wIRA</span>
<span class="t" style="left:561.71px;top:738.27px;font-size:12.2px;color:#000;font-weight:bold;">IRC</span>
<span class="t" style="left:634.38px;top:738.27px;font-size:12.2px;color:#000;font-weight:bold;">Tent</span>
<span class="t" style="left:705.71px;top:738.27px;font-size:12.2px;color:#000;font-weight:bold;">LF</span>
<span class="t" style="left:778.38px;top:738.27px;font-size:12.2px;color:#000;font-weight:bold;">T1</span>
<span class="t" style="left:850.38px;top:738.27px;font-size:12.2px;color:#000;font-weight:bold;">T2</span>
<span class="t" style="left:922.38px;top:738.27px;font-size:12.2px;color:#000;font-weight:bold;">T</span>
<span class="t" style="left:957.71px;top:738.27px;font-size:12.2px;color:#000;font-weight:bold;">HF</span>
<span class="t" style="left:1030.13px;top:738.27px;font-size:12.2px;color:#000;font-weight:bold;">SPO2</span>
<span class="t" style="left:1101.71px;top:738.27px;font-size:12.2px;color:#000;font-weight:bold;">DIA</span>
<span class="t" style="left:1174.13px;top:738.27px;font-size:12.2px;color:#000;font-weight:bold;">Sys</span>
<span class="t" style="left:1245.71px;top:738.27px;font-size:12.2px;color:#000;font-weight:bold;">RESP</span>
<span class="t" style="left:1318.01px;top:738.27px;font-size:12.2px;color:#000;font-weight:bold;">O²</span>
<div class="b" style="left:331px;top:754px;width:1246px;height:18px;background:#babdbe;"></div>
<span class="t" style="left:346.26px;top:758.02px;font-size:12.5px;color:#101010;">15:56</span>
<span class="t" style="left:418.95px;top:758.02px;font-size:12.5px;color:#101010;">40</span>
<span class="t" style="left:490.26px;top:758.02px;font-size:12.5px;color:#101010;">1600</span>
<span class="t" style="left:562.64px;top:758.02px;font-size:12.5px;color:#101010;">900</span>
<span class="t" style="left:634.70px;top:758.02px;font-size:12.5px;color:#101010;">50.9</span>
<span class="t" style="left:778.70px;top:758.02px;font-size:12.5px;color:#101010;">38.4</span>
<span class="t" style="left:850.70px;top:758.02px;font-size:12.5px;color:#101010;">38.6</span>
<span class="t" style="left:958.64px;top:758.02px;font-size:12.5px;color:#101010;">95</span>
<span class="t" style="left:1030.26px;top:758.02px;font-size:12.5px;color:#101010;">100</span>
<span class="t" style="left:1246.70px;top:758.02px;font-size:12.5px;color:#101010;">30,0</span>
<div class="b" style="left:331px;top:774px;width:1246px;height:18px;background:#a9c3cc;"></div>
<span class="t" style="left:346.26px;top:778.02px;font-size:12.5px;color:#101010;">15:52</span>
<span class="t" style="left:418.95px;top:778.02px;font-size:12.5px;color:#101010;">40</span>
<span class="t" style="left:490.26px;top:778.02px;font-size:12.5px;color:#101010;">1600</span>
<span class="t" style="left:562.64px;top:778.02px;font-size:12.5px;color:#101010;">900</span>
<span class="t" style="left:634.95px;top:778.02px;font-size:12.5px;color:#101010;">42.5</span>
<span class="t" style="left:778.70px;top:778.02px;font-size:12.5px;color:#101010;">38.2</span>
<span class="t" style="left:850.70px;top:778.02px;font-size:12.5px;color:#101010;">38.4</span>
<span class="t" style="left:958.64px;top:778.02px;font-size:12.5px;color:#101010;">94</span>
<span class="t" style="left:1030.64px;top:778.02px;font-size:12.5px;color:#101010;">99</span>
<span class="t" style="left:1246.70px;top:778.02px;font-size:12.5px;color:#101010;">34,0</span>
<div class="b" style="left:331px;top:794px;width:1246px;height:18px;background:#babdbe;"></div>
<span class="t" style="left:346.26px;top:798.02px;font-size:12.5px;color:#101010;">15:50</span>
<span class="t" style="left:418.95px;top:798.02px;font-size:12.5px;color:#101010;">40</span>
<span class="t" style="left:490.70px;top:798.02px;font-size:12.5px;color:#101010;">800</span>
<span class="t" style="left:562.58px;top:798.02px;font-size:12.5px;color:#101010;">600</span>
<span class="t" style="left:634.95px;top:798.02px;font-size:12.5px;color:#101010;">4 1.3</span>
<span class="t" style="left:778.70px;top:798.02px;font-size:12.5px;color:#101010;">38.6</span>
<span class="t" style="left:850.70px;top:798.02px;font-size:12.5px;color:#101010;">38.9</span>
<span class="t" style="left:958.64px;top:798.02px;font-size:12.5px;color:#101010;">95</span>
<span class="t" style="left:1030.64px;top:798.02px;font-size:12.5px;color:#101010;">99</span>
<span class="t" style="left:1246.70px;top:798.02px;font-size:12.5px;color:#101010;">34,4</span>
<div class="b" style="left:331px;top:814px;width:1246px;height:18px;background:#a9c3cc;"></div>
<span class="t" style="left:346.26px;top:818.02px;font-size:12.5px;color:#101010;">15:53</span>
<span class="t" style="left:418.95px;top:818.02px;font-size:12.5px;color:#101010;">40</span>
<span class="t" style="left:490.26px;top:818.02px;font-size:12.5px;color:#101010;">1600</span>
<span class="t" style="left:562.26px;top:818.02px;font-size:12.5px;color:#101010;">1200</span>
<span class="t" style="left:634.58px;top:818.02px;font-size:12.5px;color:#101010;">61</span>
<span class="t" style="left:778.70px;top:818.02px;font-size:12.5px;color:#101010;">38.5</span>
<span class="t" style="left:850.70px;top:818.02px;font-size:12.5px;color:#101010;">38.7</span>
<span class="t" style="left:958.64px;top:818.02px;font-size:12.5px;color:#101010;">94</span>
<span class="t" style="left:1030.64px;top:818.02px;font-size:12.5px;color:#101010;">99</span>
<span class="t" style="left:1246.70px;top:818.02px;font-size:12.5px;color:#101010;">33,4</span>
<div class="b" style="left:331px;top:834px;width:1246px;height:18px;background:#babdbe;"></div>
<span class="t" style="left:346.26px;top:838.02px;font-size:12.5px;color:#101010;">15:53</span>
<span class="t" style="left:418.95px;top:838.02px;font-size:12.5px;color:#101010;">40</span>
<span class="t" style="left:490.26px;top:838.02px;font-size:12.5px;color:#101010;">1600</span>
<span class="t" style="left:562.26px;top:838.02px;font-size:12.5px;color:#101010;">1200</span>
<span class="t" style="left:634.58px;top:838.02px;font-size:12.5px;color:#101010;">60</span>
<span class="t" style="left:778.70px;top:838.02px;font-size:12.5px;color:#101010;">39.1</span>
<span class="t" style="left:850.70px;top:838.02px;font-size:12.5px;color:#101010;">38.9</span>
<span class="t" style="left:958.64px;top:838.02px;font-size:12.5px;color:#101010;">93</span>
<span class="t" style="left:1030.64px;top:838.02px;font-size:12.5px;color:#101010;">99</span>
<span class="t" style="left:1246.70px;top:838.02px;font-size:12.5px;color:#101010;">34,4</span>
<div class="b" style="left:331px;top:865px;width:1246px;height:29px;background:#45545a;"></div>
<span class="t" style="left:340.25px;top:872.44px;font-size:14.6px;color:#000;font-weight:bold;letter-spacing:0.48px;">Medication, Events &amp; Side-Effects</span>
<div class="b" style="left:331px;top:894px;width:1246px;height:18px;background:#ff80ff;"></div>
<span class="t" style="left:346.38px;top:898.27px;font-size:12.2px;color:#000;font-weight:bold;">time</span>
<span class="t" style="left:417.71px;top:898.27px;font-size:12.2px;color:#000;font-weight:bold;">Min</span>
<span class="t" style="left:490.13px;top:898.27px;font-size:12.2px;color:#000;font-weight:bold;">Stopp</span>
<span class="t" style="left:562.01px;top:898.27px;font-size:12.2px;color:#000;font-weight:bold;">Group</span>
<span class="t" style="left:669.21px;top:898.27px;font-size:12.2px;color:#000;font-weight:bold;">Description</span>
<span class="t" style="left:1281.71px;top:898.27px;font-size:12.2px;color:#000;font-weight:bold;">Mode</span>
<span class="t" style="left:1353.71px;top:898.27px;font-size:12.2px;color:#000;font-weight:bold;">Dosis</span>
<span class="t" style="left:1389.77px;top:898.27px;font-size:12.2px;color:#000;font-weight:bold;">Unit</span>
<div class="b" style="left:331px;top:914px;width:1246px;height:18px;background:#babdbe;"></div>
<span class="t" style="left:346.26px;top:918.02px;font-size:12.5px;color:#101010;">15:56</span>
<span class="t" style="left:418.95px;top:918.02px;font-size:12.5px;color:#101010;">40</span>
<span class="t" style="left:490.26px;top:918.02px;font-size:12.5px;color:#101010;">13:00</span>
<span class="t" style="left:562.20px;top:918.02px;font-size:12.5px;color:#101010;">MED</span>
<span class="t" style="left:634.20px;top:918.02px;font-size:12.5px;color:#101010;">RL with 1 amp. VitC</span>
<span class="t" style="left:1282.08px;top:918.02px;font-size:12.5px;color:#101010;">Infusion</span>
<span class="t" style="left:1354.26px;top:918.02px;font-size:12.5px;color:#101010;">1000</span>
<span class="t" style="left:1390.39px;top:918.02px;font-size:12.5px;color:#101010;">ml</span>
<div class="b" style="left:331px;top:934px;width:1246px;height:18px;background:#a9c3cc;"></div>
<span class="t" style="left:346.26px;top:938.02px;font-size:12.5px;color:#101010;">15:52</span>
<span class="t" style="left:418.95px;top:938.02px;font-size:12.5px;color:#101010;">40</span>
<span class="t" style="left:562.20px;top:938.02px;font-size:12.5px;color:#101010;">E</span>
<span class="t" style="left:634.58px;top:938.02px;font-size:12.5px;color:#101010;">Change to head position</span>
<span class="t" style="left:1282.08px;top:938.02px;font-size:12.5px;color:#101010;">Infusion</span>
<span class="t" style="left:1354.26px;top:938.02px;font-size:12.5px;color:#101010;">1000</span>
<span class="t" style="left:1390.39px;top:938.02px;font-size:12.5px;color:#101010;">ml</span>
<div class="b" style="left:331px;top:954px;width:1246px;height:18px;background:#babdbe;"></div>
<span class="t" style="left:346.26px;top:958.02px;font-size:12.5px;color:#101010;">15:50</span>
<span class="t" style="left:418.95px;top:958.02px;font-size:12.5px;color:#101010;">40</span>
<span class="t" style="left:562.20px;top:958.02px;font-size:12.5px;color:#101010;">MED</span>
<span class="t" style="left:634.20px;top:958.02px;font-size:12.5px;color:#101010;">Rescue Tropen</span>
<span class="t" style="left:1282.39px;top:958.02px;font-size:12.5px;color:#101010;">p.o.</span>
<span class="t" style="left:1354.26px;top:958.02px;font-size:12.5px;color:#101010;">10</span>
<span class="t" style="left:1390.39px;top:958.02px;font-size:12.5px;color:#101010;">r</span>
<div class="b" style="left:331px;top:974px;width:1246px;height:18px;background:#a9c3cc;"></div>
<span class="t" style="left:346.26px;top:978.02px;font-size:12.5px;color:#101010;">15:53</span>
<span class="t" style="left:418.95px;top:978.02px;font-size:12.5px;color:#101010;">40</span>
<span class="t" style="left:562.58px;top:978.02px;font-size:12.5px;color:#101010;">C/SE</span>
<span class="t" style="left:634.64px;top:978.02px;font-size:12.5px;color:#101010;">Sudden strong nausea</span>
<div class="b" style="left:331px;top:994px;width:1246px;height:18px;background:#babdbe;"></div>
<span class="t" style="left:346.26px;top:998.02px;font-size:12.5px;color:#101010;">15:50</span>
<span class="t" style="left:418.95px;top:998.02px;font-size:12.5px;color:#101010;">40</span>
<span class="t" style="left:562.20px;top:998.02px;font-size:12.5px;color:#101010;">MED</span>
<span class="t" style="left:634.20px;top:998.02px;font-size:12.5px;color:#101010;">Magnesium</span>
<span class="t" style="left:1282.08px;top:998.02px;font-size:12.5px;color:#101010;">Infusion</span>
<span class="t" style="left:1354.70px;top:998.02px;font-size:12.5px;color:#101010;">500</span>
<span class="t" style="left:1390.39px;top:998.02px;font-size:12.5px;color:#101010;">ml</span>
</main>
<aside aria-label="Device">
<span class="t" style="left:1630.60px;top:72.66px;font-size:15.4px;color:#fff;font-weight:bold;letter-spacing:0.21px;">Device HT 3000</span>
<span class="t" style="left:1855.01px;top:70.01px;font-size:19.6px;color:#fff;font-weight:bold;letter-spacing:1.22px;"># 01</span>
<span class="t" style="left:1630.60px;top:98.66px;font-size:15.4px;color:#7f8283;font-weight:bold;letter-spacing:0.67px;">Max Mustermann</span>
<span class="t" style="left:1632.26px;top:127.45px;font-size:14px;color:#ff0000;font-weight:bold;letter-spacing:1.10px;">Temperature 1:</span>
<span class="t" style="left:1846.35px;top:127.45px;font-size:14px;color:#ff0000;font-weight:bold;letter-spacing:0.83px;">37.2 C°</span>
<span class="t" style="left:1632.26px;top:149.15px;font-size:14px;color:#ffa500;font-weight:bold;letter-spacing:1.10px;">Temperature 2:</span>
<span class="t" style="left:1846.35px;top:149.15px;font-size:14px;color:#ffa500;font-weight:bold;letter-spacing:0.83px;">37.5 C°</span>
<div class="b" style="left:1628px;top:167px;width:275px;height:1.3px;background:#9aa0a2;"></div>
<span class="t" style="left:1630.90px;top:175.36px;font-size:15.4px;color:#00e4f4;font-weight:bold;letter-spacing:-0.02px;">Pulse:</span>
<span class="t" style="left:1840.16px;top:175.36px;font-size:15.4px;color:#00e4f4;font-weight:bold;letter-spacing:0.28px;">65 Bpm</span>
<span class="t" style="left:1630.90px;top:197.16px;font-size:15.4px;color:#d000ee;font-weight:bold;letter-spacing:0.13px;">NIBP:</span>
<span class="t" style="left:1835.64px;top:197.16px;font-size:15.4px;color:#d000ee;font-weight:bold;letter-spacing:0.89px;">85 / 120</span>
<span class="t" style="left:1631.05px;top:218.86px;font-size:15.4px;color:#00f000;font-weight:bold;transform:scaleX(0.9814);transform-origin:0 0;">SPO2:</span>
<span class="t" style="left:1861.46px;top:218.86px;font-size:15.4px;color:#00f000;font-weight:bold;letter-spacing:0.24px;">99 %</span>
<div class="b" style="left:1628px;top:241px;width:275px;height:1.3px;background:#9aa0a2;"></div>
<div class="b" style="left:1717px;top:246px;width:1.2px;height:35px;background:#9aa0a2;"></div>
<div class="b" style="left:1812px;top:246px;width:1.2px;height:35px;background:#9aa0a2;"></div>
<span class="t" style="left:1631.65px;top:248.80px;font-size:12.4px;color:#f4f4f4;letter-spacing:0.17px;">T 60:</span>
<span class="t" style="left:1675.10px;top:248.80px;font-size:12.4px;color:#f4f4f4;letter-spacing:0.35px;">55,78</span>
<span class="t" style="left:1630.91px;top:267.10px;font-size:12.4px;color:#f4f4f4;letter-spacing:0.44px;">EM 43:</span>
<span class="t" style="left:1677.30px;top:267.10px;font-size:12.4px;color:#f4f4f4;letter-spacing:0.45px;">55,78</span>
<span class="t" style="left:1726.25px;top:248.80px;font-size:12.4px;color:#f4f4f4;letter-spacing:0.23px;">T1 max:</span>
<span class="t" style="left:1777.81px;top:248.80px;font-size:12.4px;color:#f4f4f4;transform:scaleX(0.9830);transform-origin:0 0;">39 C</span>
<span class="t" style="left:1725.56px;top:267.10px;font-size:12.4px;color:#f4f4f4;transform:scaleX(0.9437);transform-origin:0 0;">Pulse max:</span>
<span class="t" style="left:1784.27px;top:267.10px;font-size:12.4px;color:#f4f4f4;letter-spacing:0.39px;">158</span>
<span class="t" style="left:1819.15px;top:248.80px;font-size:12.4px;color:#f4f4f4;letter-spacing:0.21px;">ToB:</span>
<span class="t" style="left:1853.07px;top:248.80px;font-size:12.4px;color:#f4f4f4;letter-spacing:0.61px;">123 min</span>
<span class="t" style="left:1818.47px;top:267.10px;font-size:12.4px;color:#f4f4f4;transform:scaleX(0.9387);transform-origin:0 0;">Base:</span>
<span class="t" style="left:1861.47px;top:267.10px;font-size:12.4px;color:#f4f4f4;transform:scaleX(0.9466);transform-origin:0 0;">40,8 C°</span>
<div class="b" style="left:1615px;top:305px;width:295px;height:232px;background:#0c1c08;"></div>
<span class="t" style="left:1674.83px;top:405.14px;font-size:25px;color:#fff;letter-spacing:0.59px;">See basic logic</span>
<div class="b" style="left:1615px;top:549px;width:295px;height:232px;background:#17061d;"></div>
<span class="t" style="left:1674.83px;top:662.14px;font-size:25px;color:#fff;letter-spacing:0.59px;">See basic logic</span>
<div class="b" style="left:1615px;top:792px;width:295px;height:232px;background:#1e0606;"></div>
<span class="t" style="left:1674.83px;top:902.94px;font-size:25px;color:#fff;letter-spacing:0.59px;">See basic logic</span>
<div class="b" style="left:1836px;top:1028px;width:74px;height:44px;background:#323232;border:1px solid #d4d4d4;"></div>
<svg width="1920" height="1080" viewBox="0 0 1920 1080">
<path d="M1888.60 1054.38A16.1 16.1 0 0 1 1886.85 1058.62A4.0 4.0 0 0 0 1881.22 1064.25A16.1 16.1 0 0 1 1876.98 1066.00A4.0 4.0 0 0 0 1869.02 1066.00A16.1 16.1 0 0 1 1864.78 1064.25A4.0 4.0 0 0 0 1859.15 1058.62A16.1 16.1 0 0 1 1857.40 1054.38A4.0 4.0 0 0 0 1857.40 1046.42A16.1 16.1 0 0 1 1859.15 1042.18A4.0 4.0 0 0 0 1864.78 1036.55A16.1 16.1 0 0 1 1869.02 1034.80A4.0 4.0 0 0 0 1876.98 1034.80A16.1 16.1 0 0 1 1881.22 1036.55A4.0 4.0 0 0 0 1886.85 1042.18A16.1 16.1 0 0 1 1888.60 1046.42A4.0 4.0 0 0 0 1888.60 1054.38Z" fill="#fff" stroke="#fff" stroke-width="0.5" stroke-linejoin="round"/><circle cx="1873" cy="1050.4" r="9.3" fill="none" stroke="#323232" stroke-width="1.1"/><circle cx="1873" cy="1050.4" r="6.2" fill="#323232"/>
</svg>
</aside>
</body></html>
